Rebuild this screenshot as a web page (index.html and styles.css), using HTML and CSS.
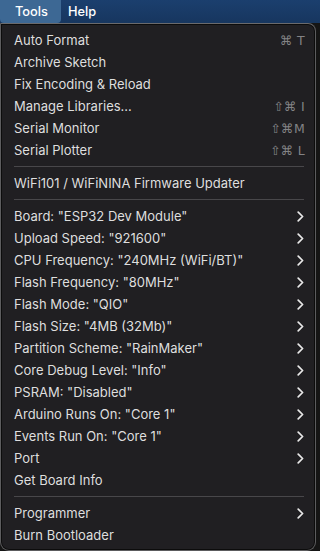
FILE: index.html
```html
<!DOCTYPE html>
<html lang="en">
<head>
    <meta charset="UTF-8">
    <meta name="viewport" content="width=device-width, initial-scale=1.0">
    <title>Tools menu</title>
    <link rel="stylesheet" href="styles.css">
</head>
<body>

    <div class="menubar">
        <span class="menubar-item active">Tools</span>
        <span class="menubar-item">Help</span>
    </div>

    <div class="menu">
        <div class="row"><span>Auto Format</span><span class="key">⌘ T</span></div>
        <div class="row"><span>Archive Sketch</span></div>
        <div class="row"><span>Fix Encoding &amp; Reload</span></div>
        <div class="row"><span>Manage Libraries...</span><span class="key">⇧⌘ I</span></div>
        <div class="row"><span>Serial Monitor</span><span class="key">⇧⌘M</span></div>
        <div class="row"><span>Serial Plotter</span><span class="key">⇧⌘ L</span></div>
        <div class="sep"></div>
        <div class="row"><span>WiFi101 / WiFiNINA Firmware Updater</span></div>
        <div class="sep"></div>
        <div class="row sub"><span>Board: "ESP32 Dev Module"</span></div>
        <div class="row sub"><span>Upload Speed: "921600"</span></div>
        <div class="row sub"><span>CPU Frequency: "240MHz (WiFi/BT)"</span></div>
        <div class="row sub"><span>Flash Frequency: "80MHz"</span></div>
        <div class="row sub"><span>Flash Mode: "QIO"</span></div>
        <div class="row sub"><span>Flash Size: "4MB (32Mb)"</span></div>
        <div class="row sub"><span>Partition Scheme: "RainMaker"</span></div>
        <div class="row sub"><span>Core Debug Level: "Info"</span></div>
        <div class="row sub"><span>PSRAM: "Disabled"</span></div>
        <div class="row sub"><span>Arduino Runs On: "Core 1"</span></div>
        <div class="row sub"><span>Events Run On: "Core 1"</span></div>
        <div class="row sub"><span>Port</span></div>
        <div class="row"><span>Get Board Info</span></div>
        <div class="sep"></div>
        <div class="row sub"><span>Programmer</span></div>
        <div class="row"><span>Burn Bootloader</span></div>
    </div>

    <script>
        // chevron for items with a submenu
        document.querySelectorAll('.row.sub').forEach(function(row) {
            row.insertAdjacentHTML('beforeend',
                '<svg class="chev" width="7" height="11" viewBox="0 0 7 11"><path d="M1.2 1.2 L5.6 5.5 L1.2 9.8" fill="none" stroke="#e8e8e8" stroke-width="1.7" stroke-linecap="round" stroke-linejoin="round"/></svg>');
        });
    </script>

</body>
</html>
```

FILE: styles.css
```css
body {
    margin: 0;
    background-color: #151515;
    font-family: "Inter", "Liberation Sans", sans-serif;
    height: 551px;
    overflow: hidden;
}

.menubar {
    height: 23px;
    display: flex;
    align-items: stretch;
    background: linear-gradient(#1b3f6e, #17365f);
}

.menubar-item {
    color: #ffffff;
    font-size: 12.8px;
    font-weight: 500;
    padding: 0 8px 0 7px;
    display: flex;
    align-items: center;
}

.menubar-item.active {
    background-color: #3d6894;
    border-radius: 0 0 4px 4px;
    padding: 0 13px 0 15px;
}

.menu {
    width: 316px;
    height: 528px;
    box-sizing: border-box;
    padding-top: 5px;
    background-color: #201f22;
    border: 1px solid #5c5c5e;
    border-top-color: #6a6a6c;
    border-radius: 0 8px 9px 9px;
    box-shadow: inset 0 0 0 1px #0c0c0c;
}

.row {
    height: 22px;
    display: flex;
    align-items: center;
    justify-content: space-between;
    padding: 0 10px 0 13px;
    color: #dedede;
    font-size: 13px;
}

.key {
    color: #838385;
    font-family: "DejaVu Sans", sans-serif;
    font-size: 12.5px;
    letter-spacing: 0.3px;
}

.chev {
    display: block;
    margin-right: 1px;
}

.sep {
    height: 1px;
    margin: 5px 11px 5px 13px;
    background-color: #48474a;
}
```
